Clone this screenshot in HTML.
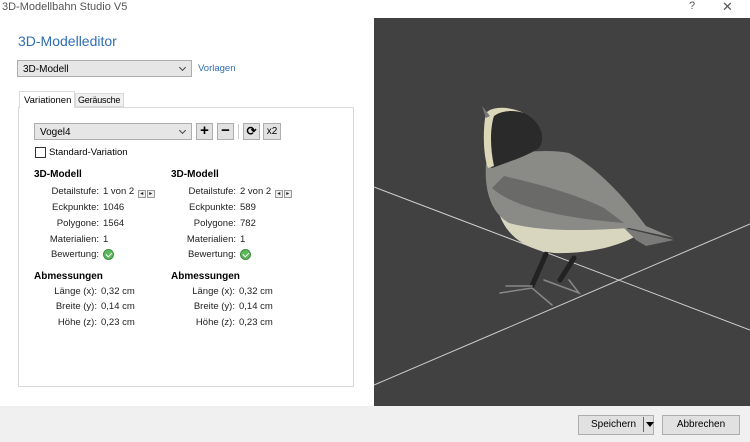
<!DOCTYPE html>
<html><head><meta charset="utf-8"><style>
*{margin:0;padding:0;box-sizing:border-box}
body{width:750px;height:442px;position:relative;overflow:hidden;background:#fff;font-family:"Liberation Sans",sans-serif;font-size:11px;color:#000}
.a{position:absolute;white-space:nowrap}
.dd{position:absolute;background:#e6e6e6;border:1px solid #adadad;height:17px;padding:3px 5px 0;font-size:10px}
.dd:after{content:"";position:absolute;right:6px;top:4px;width:4px;height:4px;border-right:1px solid #444;border-bottom:1px solid #444;transform:rotate(45deg)}
.btn{position:absolute;background:#e1e1e1;border:1px solid #adadad;text-align:center;font-size:10px}
.l{position:absolute;text-align:right;white-space:nowrap;font-size:9.5px;color:#222}
.v{position:absolute;white-space:nowrap;font-size:9.5px;color:#222}
.h{position:absolute;font-weight:bold;font-size:10px}
.ok{display:inline-block;width:11px;height:11px;border-radius:50%;background:#5cb85c;border:1px solid #3c8c3c;vertical-align:-2px;position:relative}
.ok:after{content:"";position:absolute;left:3px;top:1px;width:3px;height:5px;border-right:1.5px solid #fff;border-bottom:1.5px solid #fff;transform:rotate(45deg)}
.ar{display:inline-block;width:8px;height:8px;border:1px solid #999;background:#eee;margin-left:1px;vertical-align:-1px;font-size:6px;line-height:6px;text-align:center}
</style></head><body>
<div class="a" style="left:2px;top:1px;font-size:11px;color:#555">3D-Modellbahn Studio V5</div>
<div class="a" style="left:689px;top:0px;color:#555">?</div>
<div class="a" style="left:722px;top:-1px;color:#555;font-size:13px">✕</div>
<div class="a" style="left:18px;top:33px;font-size:14px;color:#2e6db4">3D-Modelleditor</div>
<div class="dd" style="left:17px;top:60px;width:175px">3D-Modell</div>
<div class="a" style="left:198px;top:63px;font-size:9.5px;color:#2e6db4">Vorlagen</div>
<div class="a" style="left:19px;top:91px;width:56px;height:17px;border:1px solid #d9d9d9;border-bottom:none;background:#fff;z-index:2;font-size:9.5px;padding:3px 0 0 4px">Variationen</div>
<div class="a" style="left:75px;top:93px;width:49px;height:14px;border:1px solid #d9d9d9;background:#f0f0f0;font-size:9px;padding:1px 0 0 2px;letter-spacing:-0.2px">Geräusche</div>
<div class="a" style="left:18px;top:107px;width:336px;height:280px;border:1px solid #d9d9d9"></div>
<div class="dd" style="left:34px;top:123px;width:158px">Vogel4</div>
<div class="btn" style="left:196px;top:123px;width:17px;height:17px;font-weight:bold;font-size:15px;line-height:14px">+</div>
<div class="btn" style="left:217px;top:123px;width:17px;height:17px;font-weight:bold;font-size:15px;line-height:14px">−</div>
<div class="a" style="left:238px;top:124px;width:1px;height:15px;background:#ccc"></div>
<div class="btn" style="left:243px;top:123px;width:17px;height:17px;font-weight:bold;font-size:12px;line-height:15px">⟳</div>
<div class="btn" style="left:263px;top:123px;width:18px;height:17px;line-height:15px">x2</div>
<div class="a" style="left:35px;top:147px;width:11px;height:11px;border:1px solid #333;background:#fff"></div>
<div class="a" style="left:49px;top:147px;font-size:9.5px">Standard-Variation</div>

<div class="h" style="left:34px;top:169px">3D-Modell</div>
<div class="l" style="left:0;width:99px;top:186px">Detailstufe:</div><div class="v" style="left:103px;top:186px">1 von 2 <span class="ar">◂</span><span class="ar">▸</span></div>
<div class="l" style="left:0;width:99px;top:202px">Eckpunkte:</div><div class="v" style="left:103px;top:202px">1046</div>
<div class="l" style="left:0;width:99px;top:218px">Polygone:</div><div class="v" style="left:103px;top:218px">1564</div>
<div class="l" style="left:0;width:99px;top:234px">Materialien:</div><div class="v" style="left:103px;top:234px">1</div>
<div class="l" style="left:0;width:99px;top:249px">Bewertung:</div><div class="v" style="left:103px;top:249px"><span class="ok"></span></div>

<div class="h" style="left:171px;top:169px">3D-Modell</div>
<div class="l" style="left:0;width:236px;top:186px">Detailstufe:</div><div class="v" style="left:240px;top:186px">2 von 2 <span class="ar">◂</span><span class="ar">▸</span></div>
<div class="l" style="left:0;width:236px;top:202px">Eckpunkte:</div><div class="v" style="left:240px;top:202px">589</div>
<div class="l" style="left:0;width:236px;top:218px">Polygone:</div><div class="v" style="left:240px;top:218px">782</div>
<div class="l" style="left:0;width:236px;top:234px">Materialien:</div><div class="v" style="left:240px;top:234px">1</div>
<div class="l" style="left:0;width:236px;top:249px">Bewertung:</div><div class="v" style="left:240px;top:249px"><span class="ok"></span></div>

<div class="h" style="left:34px;top:271px">Abmessungen</div>
<div class="l" style="left:0;width:97px;top:286px">Länge (x):</div><div class="v" style="left:101px;top:286px">0,32 cm</div>
<div class="l" style="left:0;width:97px;top:301px">Breite (y):</div><div class="v" style="left:101px;top:301px">0,14 cm</div>
<div class="l" style="left:0;width:97px;top:317px">Höhe (z):</div><div class="v" style="left:101px;top:317px">0,23 cm</div>
<div class="h" style="left:171px;top:271px">Abmessungen</div>
<div class="l" style="left:0;width:235px;top:286px">Länge (x):</div><div class="v" style="left:239px;top:286px">0,32 cm</div>
<div class="l" style="left:0;width:235px;top:301px">Breite (y):</div><div class="v" style="left:239px;top:301px">0,14 cm</div>
<div class="l" style="left:0;width:235px;top:317px">Höhe (z):</div><div class="v" style="left:239px;top:317px">0,23 cm</div>

<svg class="a" style="left:374px;top:18px" width="376" height="388" viewBox="0 0 376 388">
<rect width="376" height="388" fill="#414141"/>
<line x1="0" y1="169" x2="376" y2="312" stroke="#cfcfcf" stroke-width="1"/>
<line x1="0" y1="367" x2="376" y2="206" stroke="#cfcfcf" stroke-width="1"/>
<g stroke-linecap="round">
<path d="M172 236 L158 268 M200 240 L186 262" stroke="#222" stroke-width="5"/>
<path d="M126 275 L158 270 L178 287 M132 268 L158 268 M170 262 L205 275 L195 262" stroke="#888" stroke-width="1.5" fill="none"/>
</g>
<path d="M122 180 C125 215 150 232 180 235 C215 236 245 228 262 218 L240 200 Z" fill="#d9d6c0"/>
<path d="M112 145 C110 175 118 195 135 205 C170 215 225 212 255 210 L300 220 L272 208 C255 185 225 150 195 135 C170 130 130 135 112 145 Z" fill="#8a8a86"/>
<path d="M118 170 C140 190 190 200 250 205 L230 190 C200 175 160 165 130 158 Z" fill="#6a6a68"/>
<path d="M112 100 C110 130 112 145 118 150 C130 145 150 140 165 130 C175 115 160 95 140 92 C125 90 115 92 112 100 Z" fill="#2a2a2a"/>
<path d="M112 95 C108 115 110 140 114 150 L120 148 C116 130 116 110 120 98 C128 92 140 92 150 95 C135 88 118 88 112 95 Z" fill="#dcd7b8"/>
<path d="M108 88 L116 98 L112 100 Z" fill="#777"/>
<path d="M250 210 L300 222 L272 228 L262 222 Z" fill="#7a7a78"/>
</svg>

<div class="a" style="left:0;top:406px;width:750px;height:36px;background:#f0f0f0"></div>
<div class="btn" style="left:578px;top:415px;width:76px;height:20px;line-height:18px;text-align:left;padding-left:12px">Speichern</div>
<div class="a" style="left:643px;top:417px;width:1px;height:15px;background:#666"></div>
<div class="a" style="left:646px;top:422px;border-left:4px solid transparent;border-right:4px solid transparent;border-top:5px solid #000"></div>
<div class="btn" style="left:662px;top:415px;width:78px;height:20px;line-height:18px">Abbrechen</div>
</body></html>
